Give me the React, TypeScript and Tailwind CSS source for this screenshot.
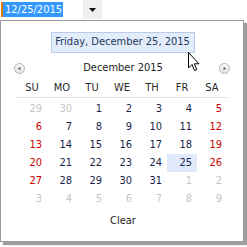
import React from 'react';

type Day = { n: number; kind: 'prev' | 'cur' | 'next' };

const HEADERS = ['SU', 'MO', 'TU', 'WE', 'TH', 'FR', 'SA'];

const buildDays = (): Day[] => {
  const days: Day[] = [{ n: 29, kind: 'prev' }, { n: 30, kind: 'prev' }];
  for (let i = 1; i <= 31; i++) days.push({ n: i, kind: 'cur' });
  let next = 1;
  while (days.length < 42) days.push({ n: next++, kind: 'next' });
  return days;
};

function NavArrow({ dir }: { dir: 'left' | 'right' }) {
  return (
    <svg width="11" height="11" viewBox="0 0 11 11">
      <defs>
        <linearGradient id={`g-${dir}`} x1="0" y1="0" x2="0" y2="1">
          <stop offset="0" stopColor="#fdfdfd" />
          <stop offset="1" stopColor="#e4e4e4" />
        </linearGradient>
      </defs>
      <circle cx="5.5" cy="5.5" r="5" fill={`url(#g-${dir})`} stroke="#b4b4b4" />
      {dir === 'left' ? <path d="M3.5 5.5 L6.5 3.5 L6.5 7.5 Z" fill="#7a7a7a" /> : <path d="M7.5 5.5 L4.5 3.5 L4.5 7.5 Z" fill="#7a7a7a" />}
    </svg>
  );
}

export default function App() {
  const days = buildDays();
  const font = { fontFamily: '"DejaVu Sans Condensed", "DejaVu Sans", sans-serif' };

  return (
    <div className="relative w-[247px] h-[247px] bg-white overflow-hidden text-[11px]" style={font}>
      {/* input row */}
      <div className="flex h-[20px]">
        <div className="flex items-start pt-[2px] pl-[1px] w-[83px]">
          <span className="w-[2px] h-[15px] bg-[#e07a10]" />
          <span className="bg-[#3399ff] text-white h-[15px] leading-[15px] pl-[2px] pr-[1px] text-[11px]">12/25/2015</span>
        </div>
        <div className="w-[19px] h-[19px] bg-[#f0f0f0] flex items-center justify-center">
          <svg width="7" height="4" viewBox="0 0 7 4">
            <path d="M0 0 H7 L3.5 4 Z" fill="#111" />
          </svg>
        </div>
      </div>

      {/* popup */}
      <div className="w-[244px] h-[222px] border border-[#9b9ba3] bg-white shadow-[3px_3px_1px_rgba(0,0,0,0.38)] flex flex-col">
        <div className="mt-[11px] self-center ml-[1px] w-[144px] h-[21px] border border-[#b9cbe8] bg-[#e3ecfa] text-[#1e395b] text-[11px] whitespace-nowrap flex items-center justify-center">
          Friday, December 25, 2015
        </div>

        <div className="mt-[6px] h-[18px] flex items-center justify-between pl-[13px] pr-[13px]">
          <NavArrow dir="left" />
          <span className="text-[#1e1e1e] pl-[2px]">December 2015</span>
          <NavArrow dir="right" />
        </div>

        <div className="mx-[16px] mt-[2px]">
          <div className="grid grid-cols-7 h-[19px] border-b border-[#e0e0e0] text-[#2a2a2a]">
            {HEADERS.map((h) => (
              <div key={h} className="flex items-center justify-center">
                {h}
              </div>
            ))}
          </div>
          <div className="grid grid-cols-7 mt-[2px]">
            {days.map((d, i) => {
              const col = i % 7;
              const selected = d.kind === 'cur' && d.n === 25;
              let color = 'text-[#1a1f4a]';
              if (d.kind !== 'cur') color = 'text-[#c6c6c6]';
              else if (col === 0 || col === 6) color = 'text-[#cc0000]';
              return (
                <div
                  key={i}
                  className={`h-[18px] flex items-center justify-end pr-[5px] ${color} ${selected ? 'bg-[#e1eafa]' : ''}`}
                >
                  {d.n}
                </div>
              );
            })}
          </div>
        </div>

        <div className="mt-[4px] h-[18px] flex items-center justify-center text-[#1e1e1e] pl-[2px]">Clear</div>
      </div>

      {/* mouse pointer */}
      <svg className="absolute left-[188px] top-[52px]" width="13" height="20" viewBox="0 0 13 20">
        <path d="M0.5 0.5 L0.5 16 L4 12.5 L6.5 18.5 L8.8 17.5 L6.3 11.8 L11 11.8 Z" fill="#fff" stroke="#000" strokeWidth="1" strokeLinejoin="miter" />
      </svg>
    </div>
  );
}
